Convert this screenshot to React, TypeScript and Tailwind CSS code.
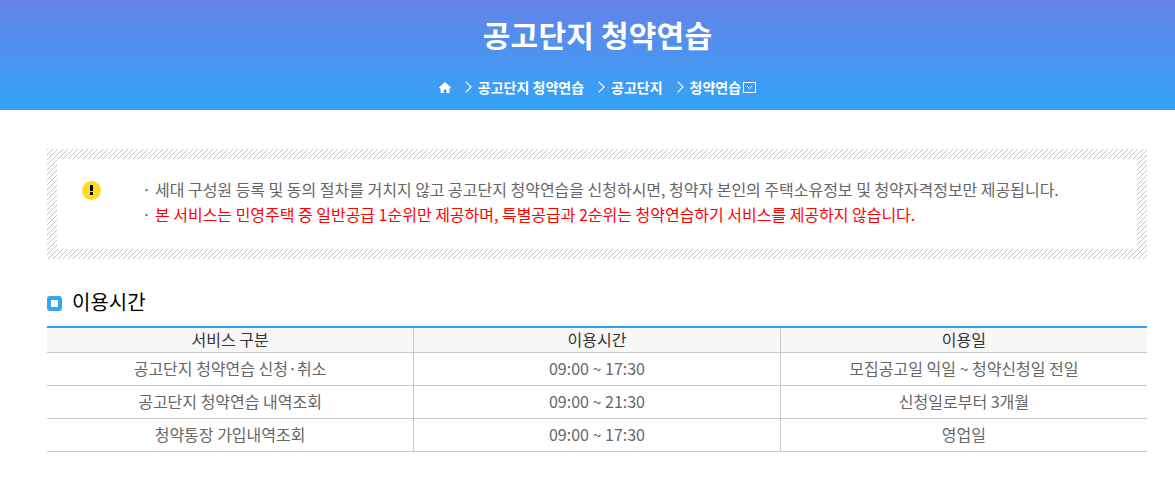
const crumbs = ["공고단지 청약연습", "공고단지", "청약연습"];

const rows = [
  { service: "공고단지 청약연습 신청·취소", time: "09:00 ~ 17:30", day: "모집공고일 익일 ~ 청약신청일 전일" },
  { service: "공고단지 청약연습 내역조회", time: "09:00 ~ 21:30", day: "신청일로부터 3개월" },
  { service: "청약통장 가입내역조회", time: "09:00 ~ 17:30", day: "영업일" },
];

function HomeIcon() {
  return (
    <svg width="12" height="11" viewBox="0 0 12 11" fill="#fff">
      <path d="M6 0 12 5.6 11.2 6.4H10.4V11H7.3V7.4H4.7V11H1.6V6.4H.8L0 5.6Z" />
    </svg>
  );
}

function ArrowIcon() {
  return (
    <svg className="-mt-px" width="7" height="12" viewBox="0 0 7 12" fill="none" stroke="#fff" strokeWidth="1.1">
      <path d="M.6.6 6.1 6 .6 11.4" />
    </svg>
  );
}

function DropIcon() {
  return (
    <svg width="13" height="11" viewBox="0 0 13 11" fill="none" stroke="#fff">
      <rect x=".5" y=".5" width="12" height="10" />
      <path d="M4 4 6.5 6.5 9 4" />
    </svg>
  );
}

export default function App() {
  return (
    <div className="h-[480px] overflow-hidden bg-white font-['Noto_Sans_CJK_KR',sans-serif] text-[16px] text-[#666]">
      {/* Header */}
      <header className="flex h-[110px] flex-col items-center bg-linear-to-b/srgb from-[#6583e6] to-[#33a3f8] text-white">
        <h1 className="mt-[12px] ml-[20px] text-[30px] leading-[44px] font-bold tracking-[0.2px]">공고단지 청약연습</h1>
        <nav className="mt-[20px] ml-[20px] flex h-[22px] items-center text-[14px] leading-[22px] font-bold">
          <HomeIcon />
          {crumbs.map((crumb) => (
            <span key={crumb} className="ml-[14px] flex items-center gap-[6px]">
              <ArrowIcon />
              {crumb}
            </span>
          ))}
          <span className="mt-px ml-[2px]">
            <DropIcon />
          </span>
        </nav>
      </header>

      <main className="mr-[28px] ml-[47px]">
        {/* Notice */}
        <section className="relative mt-[39px] h-[110px] p-[10px]">
          <svg className="absolute inset-0" width="100%" height="100%" shapeRendering="crispEdges">
            <defs>
              <pattern id="hatch" width="5" height="5" patternUnits="userSpaceOnUse">
                <path
                  fill="#c4c4c4"
                  d="M0 0h1v1H0zM4 1h1v1H4zM3 2h1v1H3zM2 3h1v1H2zM1 4h1v1H1z"
                />
              </pattern>
            </defs>
            <rect width="100%" height="100%" fill="url(#hatch)" />
          </svg>
          <div className="relative flex h-full bg-white pt-[18px] pl-[25px]">
            <svg className="mt-[4px]" width="19" height="19" viewBox="0 0 19 19">
              <circle cx="9.5" cy="9.5" r="9.5" fill="#ffdc22" />
              <path d="M8 4h3v6H8zM8 11h3v3H8z" fill="#000" />
            </svg>
            <ul className="ml-[41px] text-[16px] leading-[25px] tracking-[-0.02px] whitespace-nowrap">
              <li className="flex">
                <span className="w-[13px]">·</span>
                세대 구성원 등록 및 동의 절차를 거치지 않고 공고단지 청약연습을 신청하시면, 청약자 본인의 주택소유정보 및 청약자격정보만 제공됩니다.
              </li>
              <li className="flex">
                <span className="w-[13px]">·</span>
                <span className="text-[#f00]">
                  본 서비스는 민영주택 중 일반공급 1순위만 제공하며, 특별공급과 2순위는 청약연습하기 서비스를 제공하지 않습니다.
                </span>
              </li>
            </ul>
          </div>
        </section>

        {/* Service hours */}
        <h2 className="mt-[28px] flex h-[30px] items-center gap-[10px] text-[20px] text-black">
          <span className="mt-[2px] size-[15px] rounded-[3px] border-4 border-[#33a5f4] bg-white" />
          이용시간
        </h2>
        <table className="mt-[9px] w-full table-fixed border-collapse border-t-2 border-[#33a0ee] text-center">
          <thead className="bg-[#f7f7f7] text-[#333]">
            <tr className="h-[25px] border-b border-[#c8c8c8]">
              <th className="border-r border-[#c8c8c8] p-0 leading-[23px] font-normal">서비스 구분</th>
              <th className="border-r border-[#c8c8c8] p-0 leading-[23px] font-normal">이용시간</th>
              <th className="p-0 leading-[23px] font-normal">이용일</th>
            </tr>
          </thead>
          <tbody>
            {rows.map((row) => (
              <tr key={row.service} className="h-[33px] border-b border-[#c8c8c8]">
                <td className="border-r border-[#c8c8c8] p-0 pb-[2px]">{row.service}</td>
                <td className="border-r border-[#c8c8c8] p-0 pb-[2px]">{row.time}</td>
                <td className="p-0 pb-[2px]">{row.day}</td>
              </tr>
            ))}
          </tbody>
        </table>
      </main>
    </div>
  );
}
